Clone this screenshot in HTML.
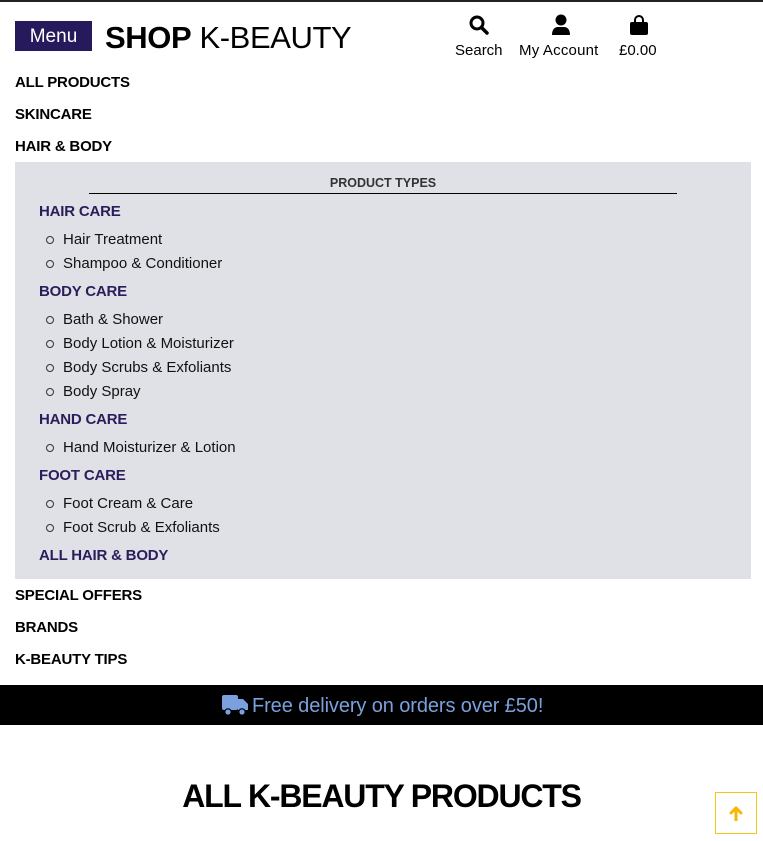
<!DOCTYPE html>
<html><head><meta charset="utf-8"><style>
*{margin:0;padding:0;box-sizing:border-box}
body{width:763px;height:841px;position:relative;background:#fff;font-family:"Liberation Sans",sans-serif;color:#000;overflow:hidden}
.a{position:absolute;white-space:nowrap;line-height:1}
.nav{font-size:15px;font-weight:bold;left:15px;letter-spacing:-0.2px}
.h{font-size:15px;font-weight:bold;color:#2b1d5c;left:39px;letter-spacing:-0.2px}
.li{font-size:15px;left:63px;color:#111;letter-spacing:0}
.li:before{content:"";position:absolute;left:-17px;top:4px;width:6px;height:6px;border:1px solid #333;border-radius:50%}
</style></head><body>
<div class="a" style="left:0;top:0;width:763px;height:2px;background:#222"></div>
<div class="a" style="left:15px;top:21px;width:77px;height:30px;background:#261a5c;color:#fff;font-size:19px;text-align:center;line-height:31px">Menu</div>
<div class="a" style="left:105px;top:22px;font-size:31px;letter-spacing:-0.4px"><b>SHOP</b> K-BEAUTY</div>
<svg class="a" style="left:468px;top:14px" width="22" height="22" viewBox="0 0 22 22"><circle cx="9" cy="9" r="6" fill="none" stroke="#000" stroke-width="3"/><path d="M13.5 13.5L19 19" stroke="#000" stroke-width="3.5" stroke-linecap="round"/></svg>
<div class="a" style="left:455px;top:43px;font-size:15px">Search</div>
<svg class="a" style="left:551px;top:14px" width="20" height="22" viewBox="0 0 20 22"><circle cx="10" cy="6" r="5.5" fill="#000"/><path d="M1 21c0-6 3-8 6-8h6c3 0 6 2 6 8z" fill="#000"/></svg>
<div class="a" style="left:519px;top:43px;font-size:15px;letter-spacing:0.2px">My Account</div>
<svg class="a" style="left:629px;top:14px" width="20" height="22" viewBox="0 0 20 22"><path d="M6 8V6a4 4 0 0 1 8 0v2" fill="none" stroke="#000" stroke-width="2"/><rect x="1" y="8" width="18" height="13" rx="2" fill="#000"/></svg>
<div class="a" style="left:619px;top:43px;font-size:15px">£0.00</div>
<div class="a nav" style="top:75px">ALL PRODUCTS</div>
<div class="a nav" style="top:107px">SKINCARE</div>
<div class="a nav" style="top:139px">HAIR &amp; BODY</div>
<div class="a" style="left:15px;top:162px;width:736px;height:417px;background:#e0e1e6"></div>
<div class="a" style="left:89px;top:177px;width:588px;text-align:center;font-size:12.5px;font-weight:bold;color:#333">PRODUCT TYPES</div>
<div class="a" style="left:89px;top:193px;width:588px;height:1px;background:#000"></div>
<div class="a h" style="top:204px">HAIR CARE</div>
<div class="a li" style="top:232px">Hair Treatment</div>
<div class="a li" style="top:256px">Shampoo &amp; Conditioner</div>
<div class="a h" style="top:284px">BODY CARE</div>
<div class="a li" style="top:312px">Bath &amp; Shower</div>
<div class="a li" style="top:336px">Body Lotion &amp; Moisturizer</div>
<div class="a li" style="top:360px">Body Scrubs &amp; Exfoliants</div>
<div class="a li" style="top:384px">Body Spray</div>
<div class="a h" style="top:412px">HAND CARE</div>
<div class="a li" style="top:440px">Hand Moisturizer &amp; Lotion</div>
<div class="a h" style="top:468px">FOOT CARE</div>
<div class="a li" style="top:496px">Foot Cream &amp; Care</div>
<div class="a li" style="top:520px">Foot Scrub &amp; Exfoliants</div>
<div class="a h" style="top:548px">ALL HAIR &amp; BODY</div>
<div class="a nav" style="top:588px">SPECIAL OFFERS</div>
<div class="a nav" style="top:620px">BRANDS</div>
<div class="a nav" style="top:652px">K-BEAUTY TIPS</div>
<div class="a" style="left:0;top:685px;width:763px;height:40px;background:#000"></div>
<svg class="a" style="left:222px;top:695px" width="27" height="21" viewBox="0 0 27 21"><rect x="0" y="0" width="16" height="15" rx="2" fill="#7aa0dd"/><path d="M16 4h5l5 5v6h-10z" fill="#7aa0dd"/><circle cx="6" cy="17" r="3.2" fill="#7aa0dd" stroke="#000" stroke-width="1.2"/><circle cx="20" cy="17" r="3.2" fill="#7aa0dd" stroke="#000" stroke-width="1.2"/></svg>
<div class="a" style="left:252px;top:696px;font-size:20px;color:#7aa0dd;letter-spacing:-0.1px">Free delivery on orders over £50!</div>
<div class="a" style="left:0;top:780px;width:763px;text-align:center;font-size:32px;font-weight:bold;letter-spacing:-1.2px">ALL K-BEAUTY PRODUCTS</div>
<div class="a" style="left:715px;top:792px;width:42px;height:42px;border:1px solid #f5c518;background:#fff"></div>
<svg class="a" style="left:728px;top:805px" width="16" height="16" viewBox="0 0 16 16"><path d="M8 15V3M3 8l5-5 5 5" fill="none" stroke="#f5b800" stroke-width="3" stroke-linecap="round" stroke-linejoin="round"/></svg>
</body></html>
